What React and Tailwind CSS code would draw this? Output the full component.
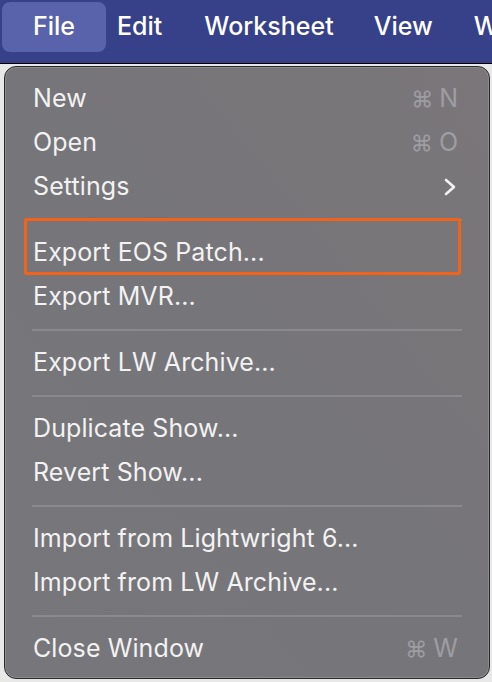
import React from "react";

const font = { fontFamily: 'Inter, "Noto Sans", "DejaVu Sans", sans-serif' };

function Row({ label, shortcut, chevron }) {
  return (
    <div className="h-[44px] flex items-center justify-between pl-[28px] pr-[31px]">
      <span className="text-[25px] text-[#f2f2f2] tracking-[0.1px]">{label}</span>
      {shortcut && (
        <span className="text-[25px] text-[#9e9da3] flex items-center gap-[6px]">
          <span className="text-[22px]">⌘</span>
          <span>{shortcut}</span>
        </span>
      )}
      {chevron && (
        <svg width="14" height="20" viewBox="0 0 14 20" className="mr-[1px]">
          <path d="M3 3 L11 10 L3 17" fill="none" stroke="#f2f2f2" strokeWidth="2.6" strokeLinecap="round" strokeLinejoin="round" />
        </svg>
      )}
    </div>
  );
}

function Sep() {
  return (
    <div className="h-[22px] flex items-center mx-[27px]">
      <div className="h-[2px] w-full bg-[#8a898e]" />
    </div>
  );
}

export default function App() {
  return (
    <div className="w-[492px] h-[682px] relative overflow-hidden bg-[#e2e2e2]" style={font}>
      <div className="h-[64px] bg-[#37418a] flex items-start pt-[2px] border-b border-black whitespace-nowrap overflow-hidden">
        <div className="ml-[2px] h-[50px] w-[104px] shrink-0 rounded-[8px] bg-[#5963ab] flex items-center justify-center text-white text-[25px] font-medium">
          File
        </div>
        <div className="h-[50px] flex items-center text-white text-[25px] font-medium">
          <span className="ml-[11px]">Edit</span>
          <span className="ml-[42px]">Worksheet</span>
          <span className="ml-[40px]">View</span>
          <span className="ml-[41px]">Window</span>
        </div>
      </div>
      <div className="h-[618px] bg-[#e8e8e8]" />
      <div className="absolute left-[4px] top-[66px] w-[486px] h-[613px] rounded-[12px] bg-gradient-to-bl from-[#7a7679] via-[#767579] to-[#77767b] border border-[#2a2a2a] shadow-[inset_0_0_0_1px_rgba(255,255,255,0.15)] pt-[10px]">
        <Row label="New" shortcut="N" />
        <Row label="Open" shortcut="O" />
        <Row label="Settings" chevron />
        <Sep />
        <Row label="Export EOS Patch..." />
        <Row label="Export MVR..." />
        <Sep />
        <Row label="Export LW Archive..." />
        <Sep />
        <Row label="Duplicate Show..." />
        <Row label="Revert Show..." />
        <Sep />
        <Row label="Import from Lightwright 6..." />
        <Row label="Import from LW Archive..." />
        <Sep />
        <Row label="Close Window" shortcut="W" />
        <div className="absolute left-[19px] top-[151px] w-[437px] h-[57px] border-[3px] border-[#f2621a] rounded-[2px]" />
      </div>
    </div>
  );
}
